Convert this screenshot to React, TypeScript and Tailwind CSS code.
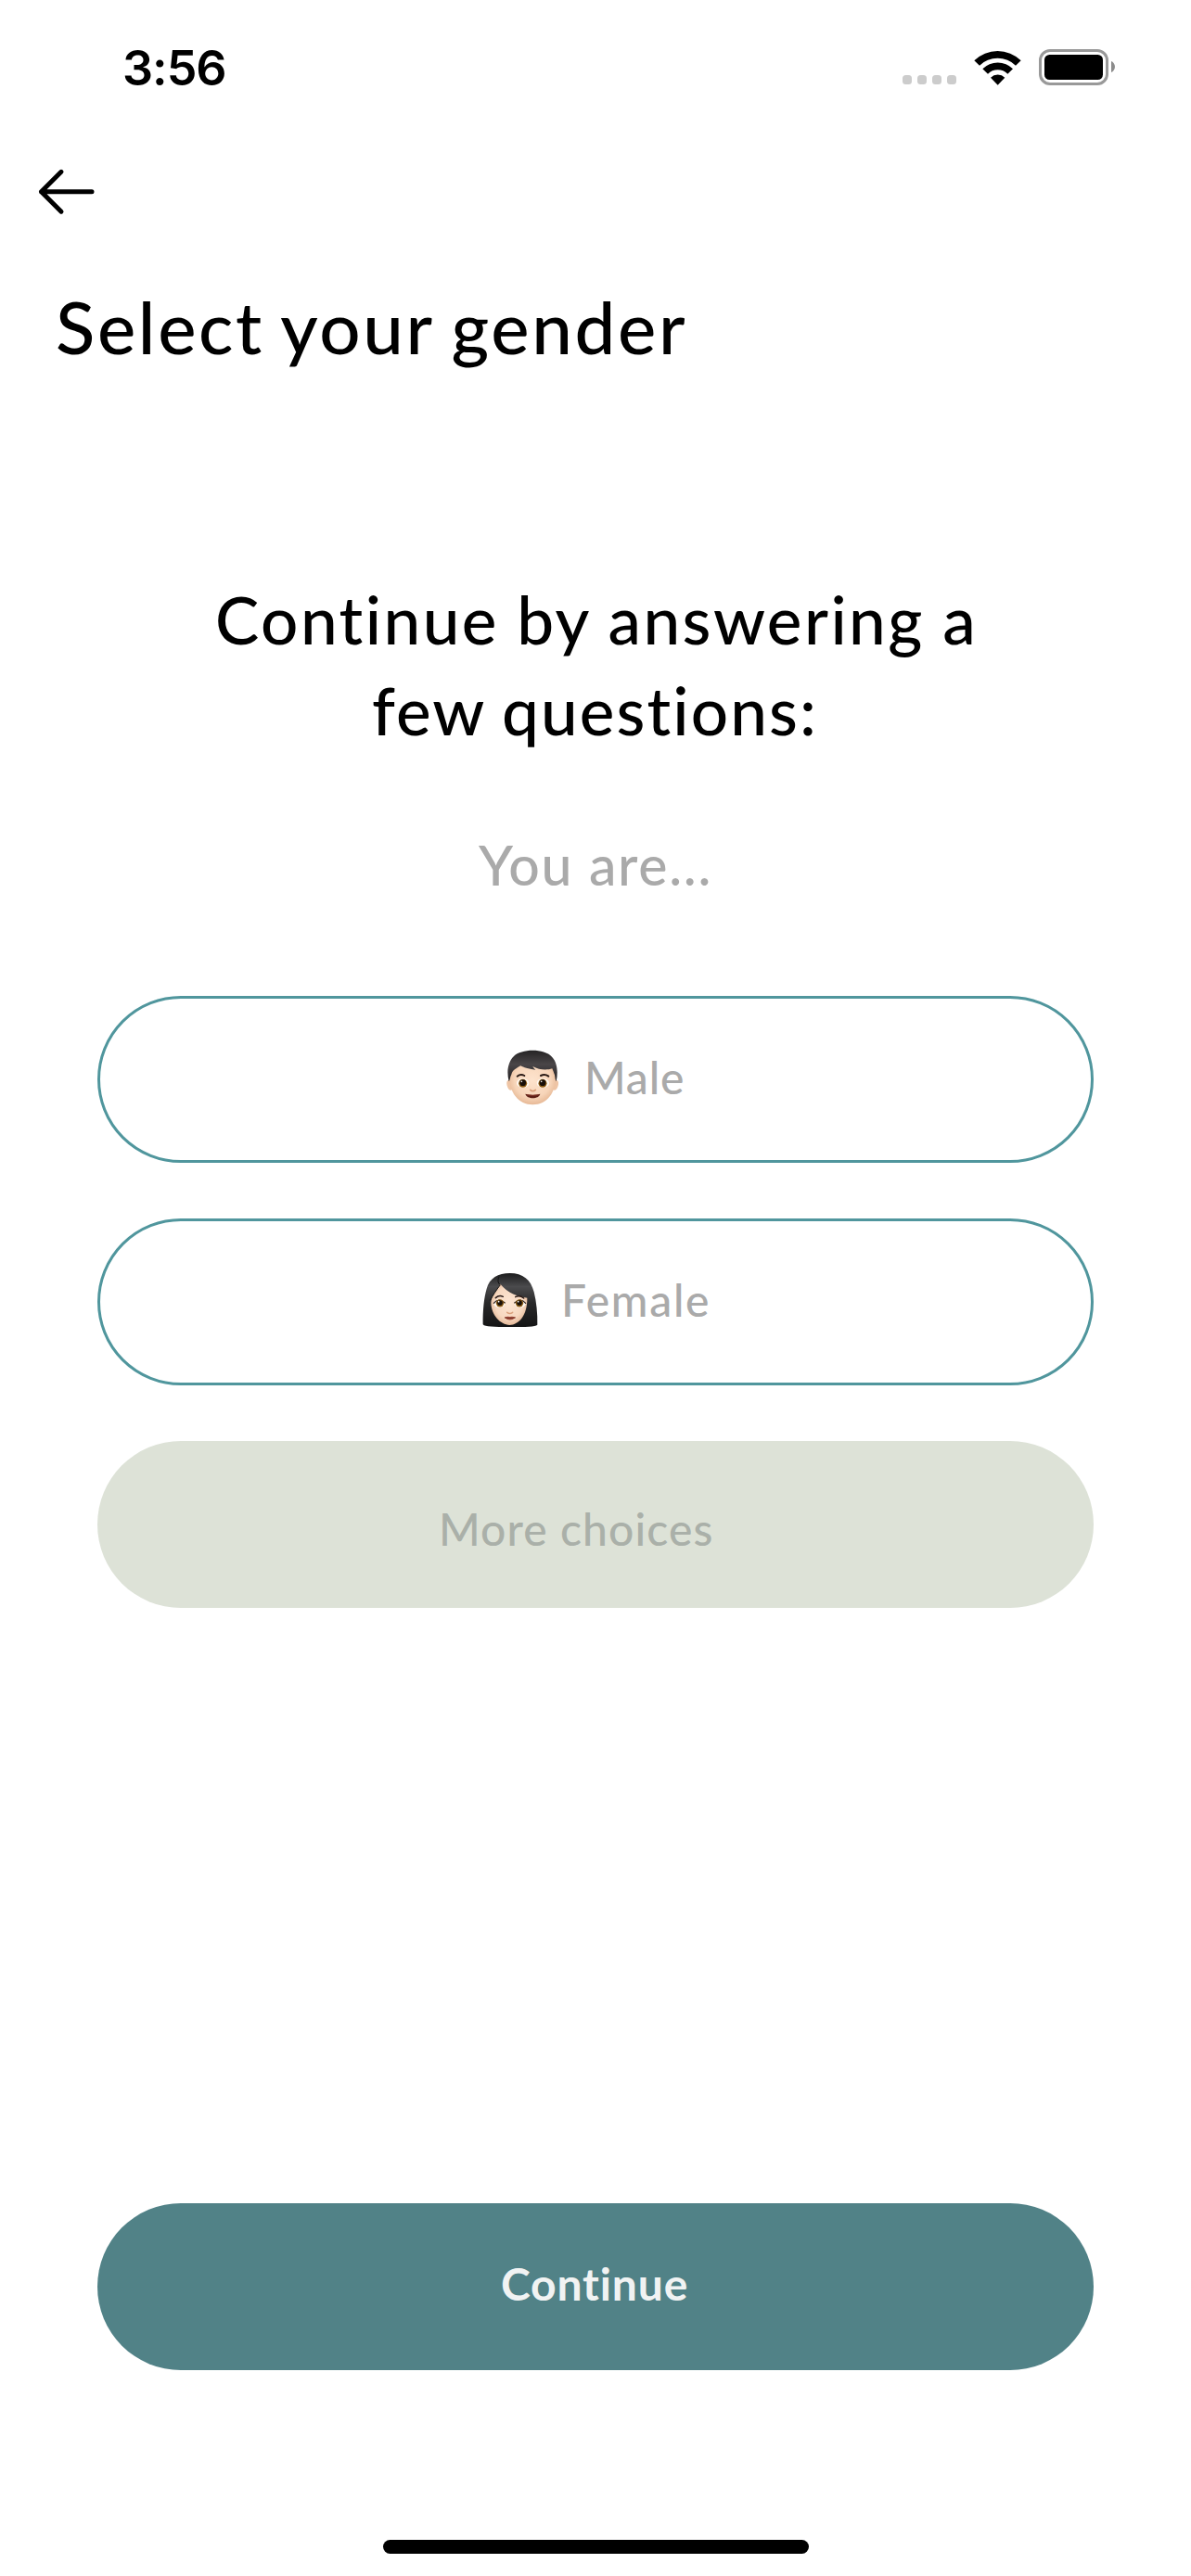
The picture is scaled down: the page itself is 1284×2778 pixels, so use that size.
import React from "react";

function StatusBar() {
  return (
    <header className="flex h-[144px] items-start justify-between pl-[132px] pr-[82px]">
      <time className="mt-[44px] font-['Inter',sans-serif] text-[52px] leading-[60px] font-semibold tracking-[-1px]">
        3:56
      </time>
      <div className="mt-[53px] flex h-[39px] items-start">
        <div className="mt-[28px] flex gap-[6px]">
          <span className="size-[10px] rounded-[3.5px] bg-[#cccccc]" />
          <span className="size-[10px] rounded-[3.5px] bg-[#cccccc]" />
          <span className="size-[10px] rounded-[3.5px] bg-[#cccccc]" />
          <span className="size-[10px] rounded-[3.5px] bg-[#cccccc]" />
        </div>
        <svg className="mt-px ml-[19px] h-[38px] w-[51px]" viewBox="300 70 153 114">
          <path d="M301 104 A108 108 0 0 1 452 104 L435 120 A84 84 0 0 0 318 120 Z" />
          <path d="M328 131 A69 69 0 0 1 426 131 L409 147 A46 46 0 0 0 345 147 Z" />
          <path d="M354 159 A33 33 0 0 1 400 159 L377 183 Z" />
        </svg>
        <div className="ml-[19px] flex h-[39px] w-[75px] rounded-[12px] border-[3px] border-[#999999] p-[3px]">
          <span className="flex-1 rounded-[5.5px] bg-black" />
        </div>
        <svg className="mt-[13px] ml-[3px] h-[12px] w-[4px]" viewBox="0 0 4 12">
          <path d="M0 0 C2 .8 4 3 4 6 C4 9 2 11.200 0 12 Z" fill="#8c8c8c" />
        </svg>
      </div>
    </header>
  );
}

function BoyFace() {
  return (
    <svg className="h-[60px] w-[56px] shrink-0" viewBox="49 65 168 180">
      <defs>
        <radialGradient id="boySkin" cx=".5" cy=".45" r=".6">
          <stop offset="0" stopColor="#fde3cd" />
          <stop offset=".65" stopColor="#f7d5b9" />
          <stop offset="1" stopColor="#e2b08b" />
        </radialGradient>
        <linearGradient id="boyHair" x1="0" y1="0" x2="0" y2="1">
          <stop offset="0" stopColor="#252324" />
          <stop offset=".45" stopColor="#4a4648" />
          <stop offset="1" stopColor="#1f1d1e" />
        </linearGradient>
      </defs>
      <path d="M62 164 C49 160 47 174 53 187 C57 197 64 198 68 193 Z" fill="#efc5a5" />
      <path d="M205 164 C218 160 220 174 214 187 C210 197 203 198 199 193 Z" fill="#efc5a5" />
      <path d="M58 150 C58 112 80 96 134 96 C188 96 209 112 209 150 C209 205 180 243 134 243 C88 243 58 205 58 150 Z" fill="url(#boySkin)" />
      <path d="M57 168 C50 140 51 108 73 86 C96 62 170 59 196 88 C215 108 216 140 210 168 C207 164 207 156 205 147 C202 138 199 131 197 126 C180 132 155 131 134 119 C137 125 140 128 143 130 C118 128 105 122 95 117 C83 124 69 130 65 145 C60 154 61 164 57 168 Z" fill="url(#boyHair)" />
      <path d="M84 151 Q95 142 107 149 M160 149 Q173 142 185 151" fill="none" stroke="#2a1b16" strokeWidth="6" strokeLinecap="round" />
      <ellipse cx="102" cy="173" rx="20" ry="15" fill="#fffaf3" />
      <ellipse cx="167" cy="173" rx="20" ry="15" fill="#fffaf3" />
      <circle cx="102" cy="174" r="13.500" fill="#8c5a12" />
      <circle cx="166" cy="174" r="13.500" fill="#8c5a12" />
      <circle cx="102" cy="172" r="10" fill="#180f08" />
      <circle cx="166" cy="172" r="10" fill="#180f08" />
      <circle cx="98" cy="168" r="2.500" fill="#fff" />
      <circle cx="162" cy="168" r="2.500" fill="#fff" />
      <path d="M126 195 Q134 203 143 195" fill="none" stroke="#dba27e" strokeWidth="5" strokeLinecap="round" />
      <path d="M110 208 Q134 214 158 208 C154 226 115 226 110 208 Z" fill="#5d1f16" />
      <path d="M115 211 Q134 216 153 211" fill="none" stroke="#8a3a2b" strokeWidth="2.500" />
    </svg>
  );
}

function WomanFace() {
  return (
    <svg className="h-[60px] w-[60px] shrink-0" viewBox="59 66 180 180">
      <defs>
        <radialGradient id="womanSkin" cx=".5" cy=".45" r=".6">
          <stop offset="0" stopColor="#fde5d3" />
          <stop offset=".65" stopColor="#f7d8c0" />
          <stop offset="1" stopColor="#e0b08e" />
        </radialGradient>
        <linearGradient id="womanHair" x1="0" y1="0" x2="0" y2="1">
          <stop offset="0" stopColor="#1c1c1d" />
          <stop offset=".25" stopColor="#4b4b4d" />
          <stop offset=".55" stopColor="#29292a" />
          <stop offset="1" stopColor="#141415" />
        </linearGradient>
      </defs>
      <path d="M61 235 C60 190 64 150 73 119 C82 85 110 69 148 69 C190 69 216 90 226 130 C234 162 238 200 237 236 C230 243 200 243 148 243 C96 243 68 243 61 235 Z" fill="url(#womanHair)" />
      <path d="M117 104 C105 128 88 140 87 165 C88 205 117 235 147 237 C178 235 205 205 204 149 C176 145 140 133 117 104 Z" fill="url(#womanSkin)" />
      <path d="M113 80 C108 92 109 101 117 107 C104 124 92 142 84 158" fill="none" stroke="#141414" strokeWidth="3" />
      <path d="M102 149 Q113 139 126 145 M166 146 Q180 139 193 150" fill="none" stroke="#2a1a16" strokeWidth="4.500" strokeLinecap="round" />
      <ellipse cx="114" cy="167" rx="18" ry="13.500" fill="#fffaf3" />
      <ellipse cx="181" cy="167" rx="18" ry="13.500" fill="#fffaf3" />
      <path d="M96 166 Q111 147 132 165 M163 165 Q184 147 199 166" fill="none" stroke="#2b1d1a" strokeWidth="3.500" strokeLinecap="round" />
      <circle cx="116" cy="166" r="12.500" fill="#8c5a12" />
      <circle cx="179" cy="166" r="12.500" fill="#8c5a12" />
      <circle cx="116" cy="165" r="8.500" fill="#180f08" />
      <circle cx="179" cy="165" r="8.500" fill="#180f08" />
      <circle cx="112" cy="161" r="2.500" fill="#fff" />
      <circle cx="175" cy="161" r="2.500" fill="#fff" />
      <path d="M139 196 Q148 203 157 196" fill="none" stroke="#dba27e" strokeWidth="4.500" strokeLinecap="round" />
      <path d="M130 212 Q140 207 148 210 Q156 207 167 212 Q148 229 130 212 Z" fill="#a4503f" />
      <path d="M131 213 Q148 216 166 213" fill="none" stroke="#6e2b20" strokeWidth="2.500" />
    </svg>
  );
}

export default function App() {
  return (
    <div className="flex h-[2778px] w-[1284px] flex-col bg-white font-['Lato',sans-serif] text-black">
      <StatusBar />

      <button aria-label="Back" className="mt-[36px] ml-[40px] h-[54px] w-[64px]">
        <svg className="h-[54px] w-[64px]" viewBox="0 0 64 54" fill="none" stroke="#000" strokeWidth="5" strokeLinecap="round" strokeLinejoin="round">
          <path d="M59 26.700 H4.500 M26 5.300 L4.500 26.700 L26 48.200" />
        </svg>
      </button>

      <h1 className="mt-[68px] ml-[60px] text-[78px] leading-[100px] font-medium tracking-[2.65px] whitespace-nowrap [word-spacing:-3px]">
        Select your gender
      </h1>

      <h2 className="mt-[217px] flex flex-col text-[71px] leading-[98px] font-medium whitespace-nowrap">
        <span className="pl-[232px] tracking-[2.45px] [word-spacing:-1px]">Continue by answering a</span>
        <span className="pl-[401px] tracking-[2.1px] [word-spacing:-2px]">few questions:</span>
      </h2>

      <p className="mt-[78px] pl-[516px] text-[59px] leading-[80px] font-medium tracking-[1.7px] whitespace-nowrap text-[#aaaaaa]">
        You are...
      </p>

      <main className="mt-[101px] flex flex-col gap-[60px] px-[105px] text-[48px] leading-[60px] text-[#aaaaaa]">
        <button className="flex h-[180px] items-center rounded-full border-[3px] border-[#50969d] pb-[4px] pl-[438px]">
          <BoyFace />
          <span className="ml-[28px] font-medium tracking-[0.8px]">Male</span>
        </button>
        <button className="flex h-[180px] items-center rounded-full border-[3px] border-[#50969d] pb-[4px] pl-[412px]">
          <WomanFace />
          <span className="ml-[25px] font-medium tracking-[1.7px]">Female</span>
        </button>
        <button className="flex h-[180px] items-center rounded-full bg-[#dde2d7] pt-[10px] pl-[368px] text-[#aab0a9]">
          <span className="font-medium tracking-[1.1px]">More choices</span>
        </button>
      </main>

      <footer className="mt-[642px] flex flex-col px-[105px]">
        <button className="flex h-[180px] items-center rounded-full bg-[#518287] pb-[6px] pl-[435px] text-[48px] leading-[60px] font-bold tracking-[0.85px] text-[#f1f3f3]">
          Continue
        </button>
        <div className="mt-[183px] ml-[308px] h-[15px] w-[459px] rounded-full bg-black" />
      </footer>
    </div>
  );
}
